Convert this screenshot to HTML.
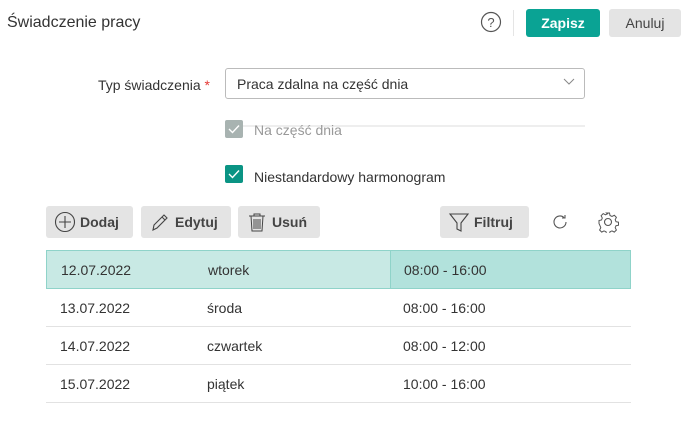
<!DOCTYPE html>
<html><head><meta charset="utf-8"><style>
*{box-sizing:border-box;margin:0;padding:0}
body{width:685px;height:440px;background:#fff;font-family:"Liberation Sans",sans-serif;color:#333;position:relative;overflow:hidden;font-size:14px}
.a{position:absolute}
.btn{position:absolute;top:206px;height:32px;background:#e4e4e4;border-radius:3px;font-size:14px;font-weight:bold;color:#444;display:flex;align-items:center;gap:4px;padding-left:8px}
.row{position:absolute;left:46px;width:585px;height:38px;border-bottom:1px solid #e2e2e2;font-size:14px;color:#333}
.row span{position:absolute;top:11px}
</style></head><body>
<div class="a" style="left:7px;top:14px;font-size:16px;color:#333">Świadczenie pracy</div>
<svg class="a" style="left:480px;top:11px" width="22" height="22"><circle cx="11" cy="11" r="9.5" fill="none" stroke="#555" stroke-width="1.2"/><text x="11" y="16" text-anchor="middle" font-size="13" fill="#555" font-family="Liberation Sans">?</text></svg>
<div class="a" style="left:513px;top:10px;width:1px;height:26px;background:#e5e5e5"></div>
<div class="a" style="left:526px;top:9px;width:74px;height:28px;background:#0aa394;border-radius:3px;color:#fff;font-weight:bold;font-size:14px;text-align:center;line-height:28px">Zapisz</div>
<div class="a" style="left:609px;top:9px;width:72px;height:28px;background:#e4e4e4;border-radius:3px;color:#444;font-size:14px;text-align:center;line-height:28px">Anuluj</div>
<div class="a" style="left:60px;top:77px;width:150px;text-align:right;font-size:14px;color:#333">Typ świadczenia <span style="color:#e53935">*</span></div>
<div class="a" style="left:225px;top:68px;width:360px;height:31px;border:1px solid #bbb;border-radius:3px;padding:7px 11px;font-size:14px;color:#333">Praca zdalna na część dnia</div>
<svg class="a" style="left:563px;top:78px" width="12" height="8"><path d="M1 1l5 5 5-5" fill="none" stroke="#888" stroke-width="1"/></svg>
<div class="a" style="left:243px;top:125px;width:342px;height:2px;background:#eee"></div>
<div class="a" style="left:225px;top:120px;width:18px;height:18px;background:#a8b3b1;border-radius:2px"></div>
<svg class="a" style="left:225px;top:120px" width="18" height="18"><path d="M4 9l3.5 3.5L14 5.5" fill="none" stroke="#fff" stroke-width="1.4"/></svg>
<div class="a" style="left:254px;top:122px;color:#999;font-size:14px">Na część dnia</div>
<div class="a" style="left:225px;top:165px;width:18px;height:18px;background:#0a9484;border-radius:2px"></div>
<svg class="a" style="left:225px;top:165px" width="18" height="18"><path d="M4 9l3.5 3.5L14 5.5" fill="none" stroke="#fff" stroke-width="1.4"/></svg>
<div class="a" style="left:254px;top:169px;color:#333;font-size:14px">Niestandardowy harmonogram</div>

<div class="btn" style="left:46px;width:87px"><svg width="22" height="22"><circle cx="11" cy="11" r="9.5" fill="none" stroke="#444" stroke-width="1.1"/><path d="M11 5v12M5 11h12" stroke="#444" stroke-width="1.1"/></svg>Dodaj</div>
<div class="btn" style="left:141px;width:90px"><svg width="22" height="22"><path d="M4 19l1-5L15 4l3 3L8 17z M13 6l3 3" fill="none" stroke="#444" stroke-width="1.1"/></svg>Edytuj</div>
<div class="btn" style="left:238px;width:82px"><svg width="22" height="22"><path d="M3 5h16M8 5V3h6v2M5 5l1 15h10l1-15M8 8v10M10 8v10M12 8v10M14 8v10" fill="none" stroke="#444" stroke-width="1"/></svg>Usuń</div>
<div class="btn" style="left:440px;width:89px"><svg width="22" height="22"><path d="M2 3h18l-7 9v8l-4-2v-6z" fill="none" stroke="#444" stroke-width="1.1"/></svg>Filtruj</div>
<svg class="a" style="left:550px;top:212px" width="20" height="20"><path d="M16 10a6 6 0 1 1-2-4.5M15 3v3h-3" fill="none" stroke="#555" stroke-width="1.1"/></svg>
<svg class="a" style="left:597px;top:211px" width="22" height="22"><circle cx="11" cy="11" r="3.5" fill="none" stroke="#555" stroke-width="1.1"/><path d="M9.5 2h3l.5 2.5 2 1 2.3-1.2 2.1 2.1-1.2 2.3.8 2 2.5.5v3l-2.5.5-.8 2 1.2 2.3-2.1 2.1-2.3-1.2-2 .8-.5 2.5h-3l-.5-2.5-2-.8-2.3 1.2-2.1-2.1 1.2-2.3-.8-2L2 12.5v-3l2.5-.5.8-2-1.2-2.3 2.1-2.1 2.3 1.2 2-1z" fill="none" stroke="#555" stroke-width="1"/></svg>

<div class="row" style="top:250px;background:#c8e9e4;border:1px solid #8fd3c9;height:39px"><span style="left:14px">12.07.2022</span><span style="left:161px">wtorek</span><div class="a" style="left:343px;top:-1px;width:241px;height:39px;background:#b2e2dc;border:1px solid #8fd3c9"></div><span style="left:357px">08:00 - 16:00</span></div>
<div class="row" style="top:289px"><span style="left:14px">13.07.2022</span><span style="left:161px">środa</span><span style="left:357px">08:00 - 16:00</span></div>
<div class="row" style="top:327px"><span style="left:14px">14.07.2022</span><span style="left:161px">czwartek</span><span style="left:357px">08:00 - 12:00</span></div>
<div class="row" style="top:365px"><span style="left:14px">15.07.2022</span><span style="left:161px">piątek</span><span style="left:357px">10:00 - 16:00</span></div>
</body></html>
